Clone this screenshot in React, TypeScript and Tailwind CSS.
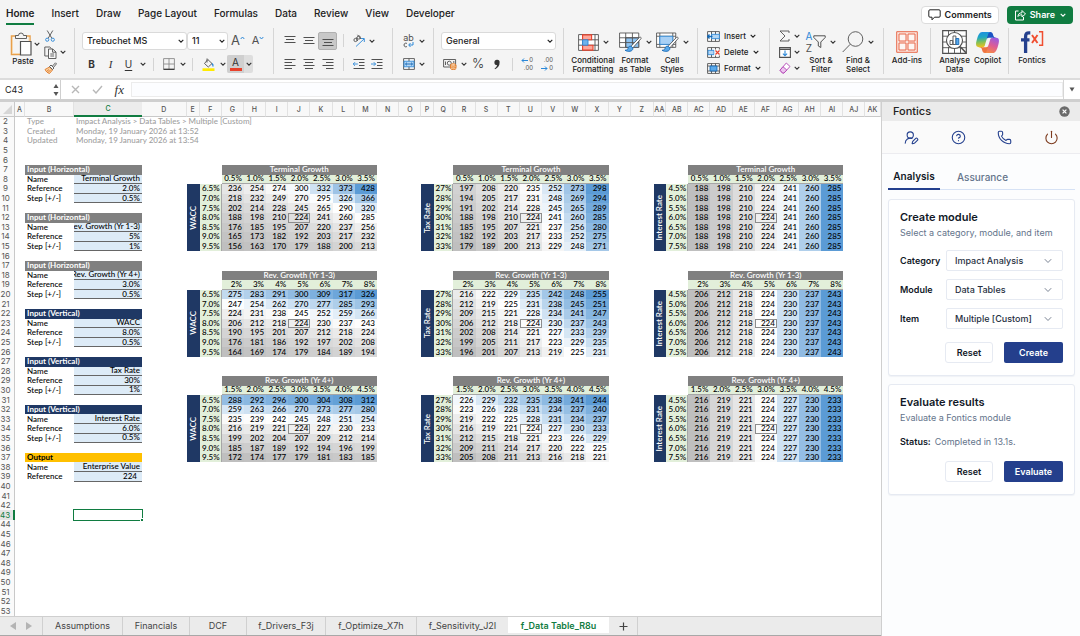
import React, { useState } from "react";
import type { CSSProperties, ReactNode } from "react";
import { CircleQuestionMark, Phone, Power, UserRoundPen } from "lucide-react";

/* ------------------------------------------------------------------ */
/* Small shared pieces                                                 */
/* ------------------------------------------------------------------ */

function Chevron({ className = "" }: { className?: string }) {
  return (
    <svg viewBox="0 0 6 6" className={`h-[6px] w-[6px] shrink-0 ${className}`} fill="none" stroke="currentColor" strokeWidth="1.1" aria-hidden="true">
      <path d="M.7 1.800 3 4.200 5.300 1.800" />
    </svg>
  );
}

function Icon({ size = "h-[14px] w-[14px]", box = "0 0 14 14", children }: { size?: string; box?: string; children: ReactNode }) {
  return (
    <svg viewBox={box} className={`shrink-0 ${size}`} fill="none" stroke="#505050" strokeWidth="0.9" aria-hidden="true">
      {children}
    </svg>
  );
}

function Tool({ label, width, className = "", children }: { label: string; width: string; className?: string; children: ReactNode }) {
  return (
    <button type="button" aria-label={label} className={`flex h-full shrink-0 items-center justify-center ${width} ${className}`}>
      {children}
    </button>
  );
}

function Divider({ width }: { width: string }) {
  return (
    <span className={`flex shrink-0 justify-center ${width}`}>
      <span className="h-[13px] w-px bg-[#d4d4d4]" />
    </span>
  );
}

function Group({ width, className = "", children }: { width: string; className?: string; children: ReactNode }) {
  return <div className={`h-[46px] shrink-0 border-r border-[#d6d6d6] ${width} ${className}`}>{children}</div>;
}

function TwoRows({ top, bottom }: { top: ReactNode; bottom: ReactNode }) {
  return (
    <>
      <div className="flex h-[25px] items-center">{top}</div>
      <div className="flex h-[22px] items-center">{bottom}</div>
    </>
  );
}

function Picker({ label, value, width, size = "text-[9px]" }: { label: string; value: string; width: string; size?: string }) {
  return (
    <span className={`relative flex shrink-0 items-center ${width}`}>
      <select aria-label={label} defaultValue={value} className={`h-[18px] w-full appearance-none rounded-[3px] border border-[#dadada] bg-white pl-[4px] pr-3 font-medium text-[#222] ${size}`}>
        <option>{value}</option>
      </select>
      <Chevron className="pointer-events-none absolute right-[3px] text-[#222]" />
    </span>
  );
}

function BigTool({ width, icon, lines, menu = false }: { width: string; icon: ReactNode; lines: string[]; menu?: boolean }) {
  return (
    <button type="button" className={`flex shrink-0 flex-col items-center ${width}`}>
      <span className="flex h-[28px] items-center gap-[4px]">
        {icon}
        {menu && <Chevron />}
      </span>
      <span className="flex flex-col items-center whitespace-nowrap text-[8px] font-medium leading-[9px] text-[#222]">
        {lines.map((line) => (
          <span key={line}>{line}</span>
        ))}
      </span>
    </button>
  );
}

/* ------------------------------------------------------------------ */
/* Ribbon icons                                                        */
/* ------------------------------------------------------------------ */

const PasteIcon = () => (
  <Icon size="h-[24px] w-[22px]" box="0 0 22 24">
    <path d="M6 4H1.5v18.500H10M16 4h4v5" stroke="#e8a04c" strokeWidth="1.5" />
    <path d="M2.500 5v16.500H10M19 5v4" stroke="#f6d7ac" />
    <path d="M5.500 6.500v-3h3a2.500 2.500 0 0 1 5 0h3v3z" fill="#f4f4f4" />
    <path d="M10.500 9.500h10.500v13.500h-10.500z" fill="#fff" strokeWidth="1.200" />
  </Icon>
);

const CutIcon = () => (
  <Icon size="h-[12px] w-[10px]" box="0 0 10 12">
    <path d="M2.200 .5 7 8.500M7.800 .5 3 8.500" />
    <circle cx="2.200" cy="9.700" r="1.600" stroke="#2b88d8" />
    <circle cx="7.800" cy="9.700" r="1.600" stroke="#2b88d8" />
  </Icon>
);

const CopyIcon = () => (
  <Icon size="h-[13px] w-[13px]" box="0 0 13 13">
    <path d="M4.500 10H.8V1h5l1.700 1.700" />
    <path d="M4.500 3h4.300L12 6v6.500H4.500z" fill="#f8f8f8" />
    <path d="M8.500 3v3.200H12M6.300 8h3.800M6.300 10h3.800" />
  </Icon>
);

const BrushIcon = () => (
  <Icon size="h-[12px] w-[13px]" box="0 0 13 12">
    <path d="M1 7.500 5.500 5l3 3-3 3.500C3.500 11 2 9.500 1 7.500z" stroke="#e07b28" fill="#f9cfa0" />
    <path d="M5.500 4.500 7 3l3 3-1.500 1.500zM8.500 4 11.500.8l1 1L9.800 5" />
    <path d="M2.500 9.500 5 7.500M4 10.500 6.500 8" stroke="#e07b28" />
  </Icon>
);

const BordersIcon = () => (
  <Icon size="h-[12px] w-[12px]" box="0 0 12 12">
    <path d="M.6.600h10.800v10.800H.6zM6 .6v10.800M.6 6h10.800" stroke="#8a8a8a" />
    <path d="M.6 11.300h10.800" stroke="#333" strokeWidth="1.200" />
  </Icon>
);

const FillIcon = () => (
  <Icon size="h-[13px] w-[13px]" box="0 0 13 13">
    <path d="M5.800 1.500 10 5.500 6.300 9 2.500 5.500zM5 .5v4" />
    <path d="M10 5.500c1 1 1.400 1.800.8 3" stroke="#2b88d8" strokeWidth="1.300" />
    <path d="M.5 10.300h12v2.700h-12z" fill="#ffeb00" stroke="none" />
  </Icon>
);

function Lines({ rows }: { rows: [number, number, number][] }) {
  return (
    <Icon size="h-[12px] w-[12px]" box="0 0 12 12">
      {rows.map(([y, from, to]) => (
        <path key={y} d={`M${from} ${y}H${to}`} strokeWidth="1" />
      ))}
    </Icon>
  );
}

const IndentIcon = ({ right = false }: { right?: boolean }) => (
  <Icon size="h-[12px] w-[12px]" box="0 0 12 12">
    <path d="M.5 1.500h11M6 4.500h5.500M6 7.500h5.500M.5 10.500h11" strokeWidth="1" />
    {right ? <path d="M0 6h4.500M2.800 4.200 4.600 6 2.800 7.800" stroke="#2b88d8" /> : <path d="M4.800 6H.3M2 4.200.2 6 2 7.800" stroke="#2b88d8" />}
  </Icon>
);

const MergeIcon = () => (
  <Icon size="h-[12px] w-[12px]" box="0 0 12 12">
    <path d="M.6.600h10.800v10.800H.6z" fill="#fff" />
    <path d="M1 3.200h10v5.600H1z" fill="#b5d6f3" stroke="#2b88d8" />
    <path d="M6 .6v2.600M6 8.800v2.600" />
    <path d="M2.500 6h7M4 4.600 2.500 6 4 7.400M8 4.600 9.500 6 8 7.400" stroke="#1769b5" />
  </Icon>
);

const CurrencyIcon = () => (
  <Icon size="h-[12px] w-[14px]" box="0 0 14 12">
    <path d="M.6 1.500h12v7.500H.6z" />
    <circle cx="6.300" cy="5.200" r="2" />
    <path d="M2.500 3.500v3.500M10.800 3v2" />
    <path d="M7.500 7c0-1.800 5.500-1.800 5.500 0v3.500c0 1.500-5.500 1.500-5.500 0z" fill="#fbd9b5" stroke="#e07b28" />
    <path d="M7.500 7.200c0 1.300 5.500 1.300 5.500 0M7.500 9c0 1.300 5.500 1.300 5.500 0" stroke="#e07b28" />
  </Icon>
);

const CondIcon = () => (
  <Icon size="h-[17px] w-[21px]" box="0 0 21 17">
    <path d="M.6.600h19.800v15.800H.6z" fill="#fff" />
    <path d="M.6 5.800h19.800M.6 11.200h19.800M4.600.6v15.800M17 .6v15.800" />
    <path d="M4.600.900h9v4.900h-9zM4.600 11.200h10.400v4.900H4.600z" fill="#fca79a" stroke="#e8412b" strokeWidth="1.100" />
    <path d="M4.600 5.800H10v5.400H4.600z" fill="#6fb3ec" stroke="#2b88d8" />
  </Icon>
);

const BrushOver = () => (
  <>
    <path d="M21.500 5 12.500 14.500l1.800 1.800L23 6.500c.5-1-.6-2-1.500-1.500z" fill="#fff" />
    <path d="M12.500 14.300c-2-.2-3 1.200-3.200 2.700-.2 1.200-1.500 1.500-3 1.600 2.500 1.900 8.500 1.800 8.200-2.300z" fill="#5aa9ea" stroke="#1769b5" />
  </>
);

const TableIcon = () => (
  <Icon size="h-[20px] w-[23px]" box="0 0 24 20">
    <path d="M.6.600h20v15H.6z" fill="#fff" />
    <path d="M7 5.600h13.600v10H7z" fill="#8fc4f2" />
    <path d="M.6 5.600h20M.6 10.600h20M7 .6v15M14 .6v15" />
    <BrushOver />
  </Icon>
);

const StylesIcon = () => (
  <Icon size="h-[20px] w-[23px]" box="0 0 24 20">
    <path d="M.6.600h20v15H.6z" fill="#fff" />
    <path d="M.6 4h20M.6 12.500h20M4 .6v15M17.500.6v15" />
    <path d="M4 4h13.500v8.500H4z" fill="#a8d0f5" stroke="#2b88d8" />
    <BrushOver />
  </Icon>
);

const RowGrid = ({ kind }: { kind: "insert" | "delete" | "format" }) => (
  <Icon size="h-[11px] w-[13px]" box="0 0 13 11">
    <path d="M.6.600h11.800v9.800H.6zM4.500.6v9.800M8.500.6v9.800" fill="#fff" />
    {kind === "insert" && (
      <>
        <path d="M4.500 3.300h7.900v4.400H4.500z" fill="#b5d6f3" stroke="#2b88d8" />
        <path d="M5.500 5.500H.5M2.500 3.500.5 5.500l2 2" stroke="#1769b5" strokeWidth="1.300" />
      </>
    )}
    {kind === "delete" && (
      <>
        <path d="M1 3.300h6v4.400H1z" fill="#b5d6f3" stroke="#2b88d8" />
        <path d="M7.500 2.500h5.500v6H7.500z" fill="#f4f4f4" stroke="none" />
        <path d="M8.500 3.500l4 4M12.500 3.500l-4 4" stroke="#e8412b" strokeWidth="1.100" />
      </>
    )}
    {kind === "format" && (
      <>
        <path d="M.6 3h11.800M.6 8h11.800" />
        <path d="M3 3h7v5H3z" fill="#5aa9ea" stroke="#1769b5" />
      </>
    )}
  </Icon>
);

const SigmaIcon = () => (
  <Icon size="h-[12px] w-[11px]" box="0 0 11 12">
    <path d="M10 3V1H1l5 5-5 5h9V9" />
  </Icon>
);

const DownFillIcon = () => (
  <Icon size="h-[11px] w-[12px]" box="0 0 12 11">
    <path d="M.6.600h10.800v9.800H.6zM.6 2.400h10.800" fill="#fff" strokeWidth="1.100" />
    <path d="M6 3.500v5.200M3.900 6.700 6 8.800l2.100-2.100" stroke="#2b88d8" strokeWidth="1.100" />
  </Icon>
);

const EraserIcon = () => (
  <Icon size="h-[12px] w-[12px]" box="0 0 12 12">
    <path d="M7.300 1 11 4.500 5 11H3.500L1 8.200z" stroke="#b243b5" fill="#fff" />
    <path d="M4 4.700 7.800 8 5 11H3.500L1 8.200z" stroke="#b243b5" fill="#ecc4ee" />
  </Icon>
);

const SortIcon = () => (
  <span className="flex items-center gap-px">
    <span className="flex flex-col text-[10px] leading-[12px]">
      <span className="text-[#2b88d8]">A</span>
      <span className="text-[#505050]">Z</span>
    </span>
    <Icon size="h-[14px] w-[13px]" box="0 0 13 14">
      <path d="M.8.800h11.400v1.700L7.800 7v5.500L5.300 11V7L.8 2.500z" strokeWidth="1" />
    </Icon>
  </span>
);

const FindIcon = () => (
  <Icon size="h-[22px] w-[22px]" box="0 0 22 22">
    <circle cx="13.500" cy="8" r="7.300" />
    <path d="M8.300 13.200.7 21" />
  </Icon>
);

const AddinsIcon = () => (
  <Icon size="h-[22px] w-[22px]" box="0 0 22 22">
    <g stroke="#e8694a" strokeWidth="1">
      <path d="M.7.700h20.600v20.600H.7z" fill="#fbe3dc" />
      <path d="M3 3h7v7H3zM12 3h7v7h-7zM3 12h7v7H3zM12 12h7v7h-7z" fill="#fdf6f3" />
    </g>
  </Icon>
);

const AnalyseIcon = () => (
  <Icon size="h-[24px] w-[25px]" box="0 0 25 24">
    <path d="M.7.700h23.600v22.600H.7z" fill="#fff" strokeWidth="1.200" />
    <path d="M.7 6.200h23.600M.7 12h23.600M.7 17.700h23.600M6.500 17v6M12.500.7v22.600M18.500 18v5.300M6.500.7v5" />
    <circle cx="12.500" cy="10.500" r="8" fill="#fff" strokeWidth="1.100" />
    <path d="M18 16.500l6 6.300" strokeWidth="1.600" />
    <path d="M8 10.500h2.800v4H8zM11 6h2.900v8.500H11z" fill="#fff" />
    <path d="M14 8.500h2.800v6H14z" fill="#5aa9ea" stroke="#1769b5" />
  </Icon>
);

const CopilotIcon = () => (
  <svg viewBox="0 0 24 22" className="h-[21px] w-[23px]" aria-hidden="true">
    <defs>
      <linearGradient id="cpLeft" x1="0.300" y1="0" x2="0.400" y2="1">
        <stop offset="0" stopColor="#1f8fe0" />
        <stop offset="0.350" stopColor="#1fa7c4" />
        <stop offset="0.650" stopColor="#7fc05a" />
        <stop offset="1" stopColor="#f2c21c" />
      </linearGradient>
      <linearGradient id="cpRight" x1="0.700" y1="0" x2="0.300" y2="1">
        <stop offset="0" stopColor="#9a5be0" />
        <stop offset="0.500" stopColor="#de5c94" />
        <stop offset="1" stopColor="#f58a48" />
      </linearGradient>
    </defs>
    <path fill="#1c55c4" d="M17.533 1.829A2.528 2.528 0 0015.110 0h-.737a2.531 2.531 0 00-2.484 2.087l-1.263 6.937.314-1.080a2.528 2.528 0 012.424-1.833h4.284l1.797.706 1.731-.706h-.505a2.528 2.528 0 01-2.423-1.829l-.715-2.453z" />
    <path fill="#ee7440" d="M6.726 20.160A2.528 2.528 0 009.152 22h1.566c1.370 0 2.490-1.100 2.525-2.480l.17-6.690-.357 1.228a2.528 2.528 0 01-2.423 1.830h-4.320l-1.540-.842-1.667.843h.497c1.124 0 2.113.75 2.426 1.840l.697 2.432z" />
    <path fill="url(#cpLeft)" d="M15 0H6.252c-2.500 0-4 3.331-5 6.662-1.184 3.947-2.734 9.225 1.750 9.225H6.780c1.130 0 2.120-.753 2.430-1.847.657-2.317 1.809-6.359 2.713-9.436.46-1.563.842-2.906 1.430-3.742A1.970 1.970 0 0115 0" />
    <path fill="url(#cpRight)" d="M9 22h8.749c2.500 0 4-3.332 5-6.663 1.184-3.948 2.734-9.227-1.750-9.227H17.220c-1.129 0-2.120.754-2.430 1.848a1149.200 1149.200 0 01-2.713 9.437c-.46 1.564-.842 2.907-1.430 3.743A1.970 1.970 0 019 22" />
  </svg>
);

const FonticsIcon = () => (
  <svg viewBox="0 0 24 24" className="h-[24px] w-[24px]" fill="none" aria-hidden="true">
    <path d="M10.300 2.800H9C6.600 2.800 5.600 4 5.600 6.500V23M1 9.800h8.500" stroke="#24408e" strokeWidth="3.300" />
    <path d="M12 5l5.500 8M17.500 5 12 13" stroke="#f04e30" strokeWidth="1.900" />
    <path d="M19 1.800h3.500v13.400H19" stroke="#f04e30" strokeWidth="1.500" />
  </svg>
);

/* ------------------------------------------------------------------ */
/* Ribbon                                                              */
/* ------------------------------------------------------------------ */

const MENU = ["Home", "Insert", "Draw", "Page Layout", "Formulas", "Data", "Review", "View", "Developer"];

function MenuBar() {
  return (
    <header className="flex h-[28px] shrink-0 items-center justify-between pl-[6px] pr-[7px] pt-[2px]">
      <nav className="flex gap-[17px]">
        {MENU.map((item) => (
          <a key={item} href="#" className={`border-b-2 pb-[2px] text-[10px] leading-[15px] text-[#222] ${item === "Home" ? "border-[#107c41] font-semibold" : "border-transparent font-medium"}`}>
            {item}
          </a>
        ))}
      </nav>
      <div className="flex gap-[8px]">
        <button type="button" className="flex h-[18px] items-center gap-[4px] rounded-[4px] border border-[#dcdcdc] bg-white px-[6px] text-[9px] font-semibold text-[#222]">
          <Icon size="h-[12px] w-[13px]" box="0 0 13 12">
            <path d="M2 .8h9q1.200 0 1.200 1.200v5q0 1.200-1.200 1.200H6.500L4 10.800V8.200H2Q.8 8.200.8 7V2Q.8.800 2 .8z" stroke="#222" strokeWidth="1" />
          </Icon>
          Comments
        </button>
        <button type="button" className="flex h-[18px] items-center gap-[4px] rounded-[4px] bg-[#107c41] px-[7px] text-[9px] font-semibold text-white">
          <Icon size="h-[12px] w-[12px]" box="0 0 12 12">
            <path d="M4.500 2H1.500v9h8V8M4 7.500c0-2.500 1.500-3.700 4-3.700V1.500L11.500 5 8 8V5.800C6 5.800 5 6.300 4 7.500z" stroke="#fff" strokeWidth="1" />
          </Icon>
          Share
          <Chevron className="ml-px" />
        </button>
      </div>
    </header>
  );
}

function Ribbon() {
  return (
    <div className="flex h-[50px] shrink-0 overflow-hidden text-[#333]" role="toolbar" aria-label="Home">
      <Group width="w-[75px]" className="flex pl-[10px]">
        <button type="button" className="flex w-[26px] flex-col items-center">
          <span className="flex h-[29px] items-center gap-[2px] self-start pt-[2px]">
            <PasteIcon />
            <Chevron />
          </span>
          <span className="text-[8px] font-medium leading-[9px] text-[#222]">Paste</span>
        </button>
        <div className="flex flex-col justify-between pl-[8px] pt-[2px]">
          <button type="button" aria-label="Cut" className="flex justify-start pl-px"><CutIcon /></button>
          <button type="button" aria-label="Copy" className="flex items-center gap-[3px]"><CopyIcon /><Chevron /></button>
          <button type="button" aria-label="Format painter" className="flex"><BrushIcon /></button>
        </div>
      </Group>

      <Group width="w-[199px]" className="pl-[7px]">
        <TwoRows
          top={
            <>
              <Picker label="Font" value="Trebuchet MS" width="w-[105px]" />
              <Picker label="Font size" value="11" width="w-[41px]" />
              <Tool label="Grow font" width="w-[20px]" className="text-[13px] text-[#505050]">
                A
                <svg viewBox="0 0 5 10" className="h-[10px] w-[5px]" fill="none" stroke="#2b88d8" aria-hidden="true"><path d="M.7 3 2.500 1l1.800 2" /></svg>
              </Tool>
              <Tool label="Shrink font" width="w-[20px]" className="text-[11px] text-[#505050]">
                A
                <svg viewBox="0 0 5 10" className="h-[10px] w-[5px]" fill="none" stroke="#2b88d8" aria-hidden="true"><path d="M.7 1 2.500 3l1.800-2" /></svg>
              </Tool>
            </>
          }
          bottom={
            <>
              <Tool label="Bold" width="w-[19px]" className="text-[10px] font-bold">B</Tool>
              <Tool label="Italic" width="w-[19px]" className="font-['Liberation_Serif',serif] text-[11px] italic">I</Tool>
              <Tool label="Underline" width="w-[17px]" className="text-[10px] underline underline-offset-2">U</Tool>
              <Tool label="Underline style" width="w-[12px]"><Chevron /></Tool>
              <Divider width="w-[9px]" />
              <Tool label="Borders" width="w-[21px]"><BordersIcon /></Tool>
              <Tool label="Border style" width="w-[8px]"><Chevron /></Tool>
              <Divider width="w-[11px]" />
              <Tool label="Fill colour" width="w-[20px]"><FillIcon /></Tool>
              <Tool label="Fill colours" width="w-[9px]"><Chevron /></Tool>
              <span className="flex h-[18px] w-[26px] shrink-0 rounded-[2px] bg-[#dedede]">
                <Tool label="Font colour" width="w-[17px]" className="flex-col rounded-l-[2px] bg-[#cfcfcf] text-[10px] leading-[11px]">
                  A
                  <span className="h-[3px] w-[12px] bg-[#e8412b]" />
                </Tool>
                <Tool label="Font colours" width="w-[9px]"><Chevron /></Tool>
              </span>
            </>
          }
        />
      </Group>

      <Group width="w-[119px]" className="pl-[6px]">
        <TwoRows
          top={
            <>
              <Tool label="Align top" width="w-[19px]"><Lines rows={[[1.500, 0.500, 11.500], [4.500, 2, 10], [7.500, 0.500, 11.500]]} /></Tool>
              <Tool label="Align middle" width="w-[19px]"><Lines rows={[[2.500, 0.500, 11.500], [5.500, 2, 10], [8.500, 0.500, 11.500]]} /></Tool>
              <span className="flex h-[18px] shrink-0 rounded-[2px] border border-[#b0b0b0] bg-[#c8c8c8]">
                <Tool label="Align bottom" width="w-[17px]"><Lines rows={[[4.500, 0.500, 11.500], [7.500, 2, 10], [10.500, 0.500, 11.500]]} /></Tool>
              </span>
              <Divider width="w-[13px]" />
              <Tool label="Orientation" width="w-[17px]">
                <Icon size="h-[14px] w-[14px]">
                  <circle cx="3.500" cy="6" r="1.600" />
                  <circle cx="6.800" cy="3.500" r="1.600" />
                  <path d="M4.300 3.300 5.600 7M5.500.8 9 5" />
                  <path d="M4 12.500 12 5M9 4.500h3.300V8" stroke="#2b88d8" />
                </Icon>
              </Tool>
              <Tool label="Orientation options" width="w-[9px]"><Chevron /></Tool>
            </>
          }
          bottom={
            <>
              <Tool label="Align left" width="w-[19px]"><Lines rows={[[1.500, 0.500, 11.500], [4.500, 0.500, 8], [7.500, 0.500, 11.500], [10.500, 0.500, 8]]} /></Tool>
              <Tool label="Align centre" width="w-[19px]"><Lines rows={[[1.500, 0.500, 11.500], [4.500, 2, 10], [7.500, 0.500, 11.500], [10.500, 2, 10]]} /></Tool>
              <Tool label="Align right" width="w-[19px]"><Lines rows={[[1.500, 0.500, 11.500], [4.500, 4, 11.500], [7.500, 0.500, 11.500], [10.500, 4, 11.500]]} /></Tool>
              <Divider width="w-[13px]" />
              <Tool label="Decrease indent" width="w-[17px]"><IndentIcon /></Tool>
              <Tool label="Increase indent" width="w-[20px]"><IndentIcon right /></Tool>
            </>
          }
        />
      </Group>

      <Group width="w-[41px]" className="pl-[7px]">
        <TwoRows
          top={
            <>
              <Tool label="Wrap text" width="w-[17px]" className="flex-col text-[9px] leading-[8px] text-[#505050]">
                ab
                <svg viewBox="0 0 11 6" className="h-[6px] w-[11px]" fill="none" stroke="#505050" aria-hidden="true">
                  <path d="M4 1.600C3 .6 1 1.100 1 3s2 2.400 3 1.400" strokeWidth="0.900" />
                  <path d="M10 0v3H6M7.500 1 5.700 3l1.800 2" stroke="#2b88d8" />
                </svg>
              </Tool>
              <Tool label="Wrap options" width="w-[9px]"><Chevron /></Tool>
            </>
          }
          bottom={
            <>
              <Tool label="Merge" width="w-[17px]"><MergeIcon /></Tool>
              <Tool label="Merge options" width="w-[9px]"><Chevron /></Tool>
            </>
          }
        />
      </Group>

      <Group width="w-[130px]" className="pl-[7px]">
        <TwoRows
          top={<Picker label="Number format" value="General" width="w-[115px]" />}
          bottom={
            <>
              <Tool label="Currency" width="w-[18px]"><CurrencyIcon /></Tool>
              <Tool label="Currency options" width="w-[9px]"><Chevron /></Tool>
              <Tool label="Percent" width="w-[20px]" className="text-[13px] font-light">%</Tool>
              <Tool label="Comma" width="w-[18px]">
                <svg viewBox="0 0 8 11" className="h-[11px] w-[8px]" fill="#333" aria-hidden="true"><path d="M4 .8a2.500 2.500 0 0 1 2.600 2.700C6.600 6.500 5 9 2 10.300l-.4-.7C3 8.600 3.900 7.500 4 6a2.600 2.600 0 1 1 0-5.200z" /></svg>
              </Tool>
              <Divider width="w-[12px]" />
              <Tool label="Increase decimal" width="w-[19px]" className="flex-col text-[6px] leading-[8px] text-[#505050]">
                <span className="flex items-center gap-px self-end pr-[4px]">
                  <svg viewBox="0 0 7 5" className="h-[5px] w-[7px]" fill="none" stroke="#2b88d8" aria-hidden="true"><path d="M7 2.500H1M3 .5l-2 2 2 2" /></svg>0
                </span>
                <span className="self-end pr-[4px]">.00</span>
              </Tool>
              <Tool label="Decrease decimal" width="w-[20px]" className="flex-col text-[6px] leading-[8px] text-[#505050]">
                <span className="self-end pr-[4px]">.00</span>
                <span className="flex items-center gap-px self-end pr-[4px]">
                  <svg viewBox="0 0 7 5" className="h-[5px] w-[7px]" fill="none" stroke="#2b88d8" aria-hidden="true"><path d="M0 2.500h6M4 .5l2 2-2 2" /></svg>0
                </span>
              </Tool>
            </>
          }
        />
      </Group>

      <Group width="w-[134px]" className="flex pl-[6px]">
        <BigTool width="w-[46px]" icon={<CondIcon />} menu lines={["Conditional", "Formatting"]} />
        <BigTool width="w-[38px]" icon={<TableIcon />} menu lines={["Format", "as Table"]} />
        <BigTool width="w-[36px]" icon={<StylesIcon />} menu lines={["Cell", "Styles"]} />
      </Group>

      <Group width="w-[72px]" className="flex flex-col justify-between pl-[9px] pt-[2px]">
        {(["Insert", "Delete", "Format"] as const).map((name) => (
          <button key={name} type="button" className="flex h-[12px] items-center gap-[4px] text-[8px] font-medium leading-[12px] text-[#222]">
            <RowGrid kind={name.toLowerCase() as "insert" | "delete" | "format"} />
            {name}
            <Chevron />
          </button>
        ))}
      </Group>

      <Group width="w-[114px]" className="flex pl-[9px]">
        <div className="flex flex-col justify-between pt-[2px]">
          <button type="button" aria-label="AutoSum" className="flex h-[12px] items-center gap-[4px]"><SigmaIcon /><Chevron /></button>
          <button type="button" aria-label="Fill" className="flex h-[12px] items-center gap-[3px]"><DownFillIcon /><Chevron /></button>
          <button type="button" aria-label="Clear" className="flex h-[12px] items-center gap-[3px]"><EraserIcon /><Chevron /></button>
        </div>
        <BigTool width="w-[42px]" icon={<SortIcon />} menu lines={["Sort &", "Filter"]} />
        <BigTool width="w-[32px]" icon={<FindIcon />} menu lines={["Find &", "Select"]} />
      </Group>

      <Group width="w-[47px]" className="flex justify-center">
        <BigTool width="w-[40px]" icon={<AddinsIcon />} lines={["Add-ins"]} />
      </Group>
      <Group width="w-[78px]" className="flex pl-[7px]">
        <BigTool width="w-[33px]" icon={<AnalyseIcon />} lines={["Analyse", "Data"]} />
        <BigTool width="w-[33px]" icon={<CopilotIcon />} lines={["Copilot"]} />
      </Group>
      <div className="flex pl-[6px]">
        <BigTool width="w-[34px]" icon={<FonticsIcon />} lines={["Fontics"]} />
      </div>
    </div>
  );
}

function FormulaBar() {
  return (
    <div className="flex h-[24px] shrink-0 items-center border-b-[3px] border-t-2 border-b-[#cfcfcf] border-t-[#dcdcdc] bg-white">
      <div className="flex h-full w-[61px] shrink-0 items-center justify-between border-r border-[#cfcfcf] pl-[5px] pr-px">
        <input aria-label="Name box" defaultValue="C43" className="w-[40px] bg-transparent text-[9px] text-[#222] outline-none" />
        <svg viewBox="0 0 6 14" className="h-[14px] w-[6px]" fill="#555" aria-hidden="true">
          <path d="M.5 5 3 1l2.500 4zM.5 9 3 13l2.500-4z" />
        </svg>
      </div>
      <div className="flex w-[70px] shrink-0 items-center justify-between pl-[10px] pr-[7px]">
        <button type="button" aria-label="Cancel" className="text-[#b8b8b8]">
          <svg viewBox="0 0 9 9" className="h-[9px] w-[9px]" fill="none" stroke="currentColor" strokeWidth="1.400" aria-hidden="true"><path d="M1 1l7 7M8 1 1 8" /></svg>
        </button>
        <button type="button" aria-label="Enter" className="text-[#b8b8b8]">
          <svg viewBox="0 0 11 9" className="h-[9px] w-[11px]" fill="none" stroke="currentColor" strokeWidth="1.400" aria-hidden="true"><path d="M1 4.800 4 8l6-7" /></svg>
        </button>
        <button type="button" aria-label="Insert function" className="font-['Liberation_Serif',serif] text-[13px] italic leading-[14px] text-[#333]">fx</button>
      </div>
      <input aria-label="Formula" className="h-[15px] min-w-0 flex-1 border border-[#ececec] bg-[#fcfdff] px-1 text-[9px] outline-none" />
      <button type="button" aria-label="Expand formula bar" className="flex h-full w-[17px] shrink-0 items-center justify-center border-l border-[#d6d6d6]">
        <svg viewBox="0 0 6 5" className="h-[5px] w-[6px]" fill="#555" aria-hidden="true"><path d="M.5.500h5L3 4.500z" /></svg>
      </button>
    </div>
  );
}

/* ------------------------------------------------------------------ */
/* Worksheet                                                           */
/* ------------------------------------------------------------------ */

const COLUMNS = "A B C D E F G H I J K L M N O P Q R S T U V W X Y Z AA AB AC AD AE AF AG AH AI AJ AK".split(" ");
const FIRST_ROW = 2;
const LAST_ROW = 53;

/** Grid line of a column letter; line 1 holds the row numbers. */
const col = (name: string) => COLUMNS.indexOf(name) + 2;

type Cell = {
  row: number;
  column: number;
  text?: string;
  rows?: number;
  columns?: number;
  className?: string;
  vertical?: boolean;
  fill?: string;
};

const T_GROWTH = ["0.5%", "1.0%", "1.5%", "2.0%", "2.5%", "3.0%", "3.5%"];
const EARLY = ["2%", "3%", "4%", "5%", "6%", "7%", "8%"];
const LATE = ["1.5%", "2.0%", "2.5%", "3.0%", "3.5%", "4.0%", "4.5%"];
const WACC = ["6.5%", "7.0%", "7.5%", "8.0%", "8.5%", "9.0%", "9.5%"];
const TAX = ["27%", "28%", "29%", "30%", "31%", "32%", "33%"];
const INTEREST = ["4.5%", "5.0%", "5.5%", "6.0%", "6.5%", "7.0%", "7.5%"];

const parse = (text: string) => text.split("/").map((line) => line.trim().split(" ").map(Number));
const repeat = (line: string) => parse(Array(7).fill(line).join("/"));

type Matrix = { top: number; side: string; sideLabel: string; sideValues: string[]; title: string; head: string[]; data: number[][] };

const MATRICES: Matrix[] = [
  { top: 7, side: "E", sideLabel: "WACC", sideValues: WACC, title: "Terminal Growth", head: T_GROWTH, data: parse("236 254 274 300 332 373 428/218 232 249 270 295 326 366/202 214 228 245 265 290 320/188 198 210 224 241 260 285/176 185 195 207 220 237 256/165 173 182 192 203 217 232/156 163 170 179 188 200 213") },
  { top: 7, side: "P", sideLabel: "Tax Rate", sideValues: TAX, title: "Terminal Growth", head: T_GROWTH, data: parse("197 208 220 235 252 273 298/194 205 217 231 248 269 294/191 202 214 228 245 265 289/188 198 210 224 241 260 285/185 195 207 221 237 256 280/182 192 203 217 233 252 275/179 189 200 213 229 248 271") },
  { top: 7, side: "AA", sideLabel: "Interest Rate", sideValues: INTEREST, title: "Terminal Growth", head: T_GROWTH, data: repeat("188 198 210 224 241 260 285") },
  { top: 18, side: "E", sideLabel: "WACC", sideValues: WACC, title: "Rev. Growth (Yr 1-3)", head: EARLY, data: parse("275 283 291 300 309 317 326/247 254 262 270 277 285 293/224 231 238 245 252 259 266/206 212 218 224 230 237 243/190 195 201 207 212 218 224/176 181 186 192 197 202 208/164 169 174 179 184 189 194") },
  { top: 18, side: "P", sideLabel: "Tax Rate", sideValues: TAX, title: "Rev. Growth (Yr 1-3)", head: EARLY, data: parse("216 222 229 235 242 248 255/212 219 225 231 238 245 251/209 215 221 228 234 241 247/206 212 218 224 230 237 243/202 208 214 221 227 233 239/199 205 211 217 223 229 235/196 201 207 213 219 225 231") },
  { top: 18, side: "AA", sideLabel: "Interest Rate", sideValues: INTEREST, title: "Rev. Growth (Yr 1-3)", head: EARLY, data: repeat("206 212 218 224 230 237 243") },
  { top: 29, side: "E", sideLabel: "WACC", sideValues: WACC, title: "Rev. Growth (Yr 4+)", head: LATE, data: parse("288 292 296 300 304 308 312/259 263 266 270 273 277 280/235 239 242 245 248 251 254/216 219 221 224 227 230 233/199 202 204 207 209 212 214/185 187 189 192 194 196 199/172 174 177 179 181 183 185") },
  { top: 29, side: "P", sideLabel: "Tax Rate", sideValues: TAX, title: "Rev. Growth (Yr 4+)", head: LATE, data: parse("226 229 232 235 238 241 244/223 226 228 231 234 237 240/219 222 225 228 231 234 237/216 219 221 224 227 230 233/212 215 218 221 223 226 229/209 211 214 217 220 222 225/205 208 211 213 216 218 221") },
  { top: 29, side: "AA", sideLabel: "Interest Rate", sideValues: INTEREST, title: "Rev. Growth (Yr 4+)", head: LATE, data: repeat("216 219 221 224 227 230 233") },
];

const BLOCKS: { row: number; title: string; tone: string; items: [string, string][] }[] = [
  { row: 7, title: "Input (Horizontal)", tone: "bg-[#808080] text-white", items: [["Name", "Terminal Growth"], ["Reference", "2.0%"], ["Step [+/-]", "0.5%"]] },
  { row: 12, title: "Input (Horizontal)", tone: "bg-[#808080] text-white", items: [["Name", "Rev. Growth (Yr 1-3)"], ["Reference", "5%"], ["Step [+/-]", "1%"]] },
  { row: 17, title: "Input (Horizontal)", tone: "bg-[#808080] text-white", items: [["Name", "Rev. Growth (Yr 4+)"], ["Reference", "3.0%"], ["Step [+/-]", "0.5%"]] },
  { row: 22, title: "Input (Vertical)", tone: "bg-[#1f3864] text-white", items: [["Name", "WACC"], ["Reference", "8.0%"], ["Step [+/-]", "0.5%"]] },
  { row: 27, title: "Input (Vertical)", tone: "bg-[#1f3864] text-white", items: [["Name", "Tax Rate"], ["Reference", "30%"], ["Step [+/-]", "1%"]] },
  { row: 32, title: "Input (Vertical)", tone: "bg-[#1f3864] text-white", items: [["Name", "Interest Rate"], ["Reference", "6.0%"], ["Step [+/-]", "0.5%"]] },
  { row: 37, title: "Output", tone: "bg-[#ffc000] text-black", items: [["Name", "Enterprise Value"], ["Reference", "224"]] },
];

/** Three-colour scale: grey at the minimum, white half way, blue at the maximum. */
function scale(value: number, min: number, max: number) {
  const t = (value - min) / (max - min);
  const [from, to, k] = t < 0.5 ? [[191, 191, 191], [255, 255, 255], t * 2] : [[255, 255, 255], [91, 155, 213], t * 2 - 1];
  return `rgb(${from.map((c, i) => Math.round(c + (to[i] - c) * k)).join(",")})`;
}

function buildCells(): Cell[] {
  const cells: Cell[] = [];
  const notes: [string, string][] = [
    ["Type", "Impact Analysis > Data Tables > Multiple [Custom]"],
    ["Created", "Monday, 19 January 2026 at 13:52"],
    ["Updated", "Monday, 19 January 2026 at 13:54"],
  ];
  notes.forEach(([name, value], i) => {
    cells.push({ row: 2 + i, column: col("B"), text: name, className: "pl-[2px] text-[#a0a0a0]" });
    cells.push({ row: 2 + i, column: col("C"), text: value, className: "pl-[2px] text-[#a0a0a0]" });
  });
  for (const block of BLOCKS) {
    cells.push({ row: block.row, column: col("B"), columns: 2, text: block.title, className: `pl-[2px] font-bold ${block.tone}` });
    block.items.forEach(([name, value], i) => {
      cells.push({ row: block.row + 1 + i, column: col("B"), text: name, className: "pl-[2px]" });
      cells.push({
        row: block.row + 1 + i,
        column: col("C"),
        text: value,
        className: `justify-end overflow-hidden border-b border-[#666] bg-[#ddebf7] ${value === "224" ? "pr-[5px]" : "pr-[2px]"}`,
      });
    });
  }
  for (const m of MATRICES) {
    const side = col(m.side);
    const values = m.data.flat();
    const min = Math.min(...values);
    const max = Math.max(...values);
    cells.push({ row: m.top, column: side + 2, columns: 7, text: m.title, className: "justify-center bg-[#808080] font-semibold text-white" });
    m.head.forEach((text, i) => cells.push({ row: m.top + 1, column: side + 2 + i, text, className: "justify-end border-b border-[#a6a6a6] bg-[#e2efda] pr-[2px]" }));
    cells.push({ row: m.top + 2, column: side, rows: 7, text: m.sideLabel, vertical: true, className: "justify-center bg-[#1f3864] font-semibold text-white" });
    m.data.forEach((line, r) => {
      cells.push({ row: m.top + 2 + r, column: side + 1, text: m.sideValues[r], className: "justify-end border-r border-[#a6a6a6] bg-[#e2efda] pr-px" });
      line.forEach((value, c) =>
        cells.push({
          row: m.top + 2 + r,
          column: side + 2 + c,
          text: String(value),
          fill: scale(value, min, max),
          className: r === 3 && c === 3 ? "justify-end border border-[#8c8c8c] pr-px" : "justify-end pr-[2px]",
        }),
      );
    });
  }
  return cells;
}

const CELLS = buildCells();

function SheetCell({ cell }: { cell: Cell }) {
  const place: CSSProperties = {
    gridRow: `${cell.row} / span ${cell.rows ?? 1}`,
    gridColumn: `${cell.column} / span ${cell.columns ?? 1}`,
    backgroundColor: cell.fill,
  };
  return (
    <td rowSpan={cell.rows} colSpan={cell.columns} style={place} className={`flex min-h-0 min-w-0 items-center whitespace-nowrap ${cell.className ?? ""}`}>
      {cell.vertical ? <span className="rotate-180 leading-[9px] [writing-mode:vertical-rl]">{cell.text}</span> : cell.text}
    </td>
  );
}

const COLUMN_TRACKS =
  "grid-cols-[142fr_100fr_490fr_680fr_448fr_130fr_220fr_repeat(7,222fr)_225fr_220fr_125fr_195fr_repeat(7,222fr)_225fr_225fr_127fr_220fr_repeat(7,222fr)_215fr_161fr]";

function Sheet() {
  const rows = Array.from({ length: LAST_ROW - FIRST_ROW + 1 }, (_, i) => FIRST_ROW + i);
  return (
    <table className={`grid min-h-0 flex-1 grid-rows-[15px_repeat(52,minmax(0,1fr))] overflow-hidden bg-white font-['Lato',sans-serif] text-[8px] font-medium leading-[9px] text-black ${COLUMN_TRACKS}`}>
      <thead className="contents">
        <tr className="contents">
          <th aria-label="Select all" className="flex items-end justify-end border-b border-r border-[#c9c9c9] bg-[#f4f4f4] p-[2px]">
            <svg viewBox="0 0 9 9" className="h-[9px] w-[9px]" fill="#d6d6d6" aria-hidden="true"><path d="M9 0v9H0z" /></svg>
          </th>
          {COLUMNS.map((name) => (
            <th
              key={name}
              scope="col"
              className={`flex min-w-0 items-center justify-center font-['Inter',sans-serif] text-[7px] font-medium ${
                name === "C" ? "border-b-2 border-[#107c41] bg-[#ececec] text-[#107c41]" : "border-b border-r border-b-[#c9c9c9] border-r-[#e2e2e2] bg-[#f8f8f8] text-[#555]"
              }`}
            >
              {name}
            </th>
          ))}
        </tr>
      </thead>
      <tbody className="contents">
        {rows.map((number) => (
          <tr key={number} className="contents">
            <th
              scope="row"
              style={{ gridRow: number, gridColumn: 1 }}
              className={`flex min-h-0 items-center justify-center pr-[3px] font-['Inter',sans-serif] text-[8px] font-normal ${
                number === 43 ? "border-r-2 border-[#107c41] bg-[#e4e4e4] text-[#107c41]" : "border-r border-[#c9c9c9] bg-[#fafafa] text-[#555]"
              }`}
            >
              {number}
            </th>
            {CELLS.filter((cell) => cell.row === number).map((cell) => (
              <SheetCell key={`${cell.row}-${cell.column}`} cell={cell} />
            ))}
            {number === 43 && (
              <td style={{ gridRow: 43, gridColumn: col("C") }} className="relative -m-px border border-[#107c41]">
                <span className="absolute -bottom-[2px] -right-[2px] h-[4px] w-[4px] border border-white bg-[#107c41]" />
              </td>
            )}
          </tr>
        ))}
      </tbody>
    </table>
  );
}

const SHEETS: [string, string][] = [
  ["Assumptions", "w-[80px]"],
  ["Financials", "w-[67px]"],
  ["DCF", "w-[57px]"],
  ["f_Drivers_F3j", "w-[79px]"],
  ["f_Optimize_X7h", "w-[91px]"],
  ["f_Sensitivity_J2I", "w-[92px]"],
  ["f_Data Table_R8u", "w-[101px]"],
];

function SheetTabs() {
  const [active, setActive] = useState("f_Data Table_R8u");
  return (
    <div className="flex h-[20px] shrink-0 border-b border-t border-b-[#a8a8a8] border-t-[#cfcfcf] bg-[#ebebeb] text-[9px] text-[#444]">
      <div className="flex w-[42px] shrink-0 items-center justify-center gap-[10px]">
        <button type="button" aria-label="Previous sheet"><svg viewBox="0 0 6 8" className="h-[8px] w-[6px]" fill="#b4b4b4" aria-hidden="true"><path d="M6 0v8L0 4z" /></svg></button>
        <button type="button" aria-label="Next sheet"><svg viewBox="0 0 6 8" className="h-[8px] w-[6px]" fill="#b4b4b4" aria-hidden="true"><path d="M0 0v8l6-4z" /></svg></button>
      </div>
      {SHEETS.map(([name, width]) => (
        <button
          key={name}
          type="button"
          onClick={() => setActive(name)}
          className={`shrink-0 whitespace-nowrap ${width} ${active === name ? "mb-[2px] bg-white pt-px font-semibold text-[#107c41]" : "border-l border-[#d0d0d0]"}`}
        >
          {name}
        </button>
      ))}
      <button type="button" aria-label="New sheet" className="flex w-[29px] shrink-0 items-center justify-center border-r border-[#d0d0d0]">
        <svg viewBox="0 0 9 9" className="h-[9px] w-[9px]" stroke="#444" strokeWidth="1.200" aria-hidden="true"><path d="M4.500.5v8M.5 4.500h8" /></svg>
      </button>
    </div>
  );
}

/* ------------------------------------------------------------------ */
/* Task pane                                                           */
/* ------------------------------------------------------------------ */

function Field({ id, label, value }: { id: string; label: string; value: string }) {
  return (
    <div className="flex items-center">
      <label htmlFor={id} className="w-[46px] shrink-0 text-[9px] font-semibold text-[#111827]">{label}</label>
      <span className="relative flex min-w-0 flex-1 items-center">
        <select id={id} defaultValue={value} className="h-[21px] w-full appearance-none rounded-[2px] border border-[#e6eaf2] bg-white pl-[8px] pr-5 text-[9px] font-medium text-[#27303f]">
          <option>{value}</option>
        </select>
        <svg viewBox="0 0 8 6" className="pointer-events-none absolute right-[11px] h-[6px] w-[8px]" fill="none" stroke="#7b8494" aria-hidden="true"><path d="M.8 1.200 4 4.500l3.200-3.300" /></svg>
      </span>
    </div>
  );
}

function Card({ title, note, action, children }: { title: string; note: string; action: string; children: ReactNode }) {
  return (
    <section className="flex flex-col rounded-[3px] border border-[#e6eaf2] bg-white px-[11px] pb-[12px] pt-[10px] shadow-[0_1px_1px_rgba(20,40,90,0.050)]">
      <h2 className="text-[11px] font-semibold leading-[14px] text-[#111827]">{title}</h2>
      <p className="pt-[3px] text-[9px] leading-[12px] text-[#64748b]">{note}</p>
      {children}
      <div className="flex justify-end gap-[11px]">
        <button type="button" className="h-[21px] w-[48px] rounded-[3px] border border-[#e6eaf2] bg-white text-[9px] font-semibold text-[#111827]">Reset</button>
        <button type="button" className="h-[21px] w-[59px] rounded-[2px] bg-[#243f8c] text-[9px] font-semibold text-white">{action}</button>
      </div>
    </section>
  );
}

function TaskPane() {
  return (
    <aside className="flex w-[199px] shrink-0 flex-col border-l border-[#cfcfcf] bg-[#fcfdfe]">
      <div className="flex h-[19px] shrink-0 items-center justify-between bg-[#ebebeb] pl-[11px] pr-[10px]">
        <h1 className="text-[11px] font-medium text-[#222]">Fontics</h1>
        <button type="button" aria-label="Close">
          <svg viewBox="0 0 11 11" className="h-[11px] w-[11px]" aria-hidden="true">
            <circle cx="5.500" cy="5.500" r="5.200" fill="#6b6b6b" />
            <path d="M3.600 3.600l3.800 3.800M7.400 3.600 3.600 7.400" stroke="#fff" strokeWidth="1.200" />
          </svg>
        </button>
      </div>
      <div className="flex h-[33px] shrink-0 items-center justify-between border-b border-[#ececf0] bg-[#fafafa] pl-[22px] pr-[21px] text-[#24408e]">
        <button type="button" aria-label="Account"><UserRoundPen size={15} strokeWidth={1.75} /></button>
        <button type="button" aria-label="Help"><CircleQuestionMark size={15} strokeWidth={1.75} /></button>
        <button type="button" aria-label="Contact"><Phone size={15} strokeWidth={1.75} /></button>
        <button type="button" aria-label="Sign out" className="text-[#7c3a1d]"><Power size={15} strokeWidth={1.75} /></button>
      </div>
      <div className="flex flex-col gap-[8px] pl-[6px] pr-[5px] pt-[12px]">
        <div role="tablist" className="mb-px flex border-b border-[#d6e2f5] text-[10px] leading-[20px]">
          <button type="button" role="tab" aria-selected="true" className="-mb-px w-[52px] border-b-2 border-[#24408e] pb-[2px] font-semibold text-[#111827]">Analysis</button>
          <button type="button" role="tab" aria-selected="false" className="pb-[2px] pl-[17px] font-medium text-[#64748b]">Assurance</button>
        </div>
        <Card title="Create module" note="Select a category, module, and item" action="Create">
          <div className="flex flex-col gap-[8px] pb-[13px] pt-[11px]">
            <Field id="category" label="Category" value="Impact Analysis" />
            <Field id="module" label="Module" value="Data Tables" />
            <Field id="item" label="Item" value="Multiple [Custom]" />
          </div>
        </Card>
        <Card title="Evaluate results" note="Evaluate a Fontics module" action="Evaluate">
          <p className="flex gap-[4px] pb-[13px] pt-[12px] text-[9px] leading-[12px] text-[#64748b]">
            <span className="font-semibold text-[#111827]">Status:</span>
            Completed in 13.1s.
          </p>
        </Card>
      </div>
    </aside>
  );
}

export default function App() {
  return (
    <div className="flex h-screen flex-col overflow-hidden bg-[#f4f4f4] font-['Inter',sans-serif]">
      <MenuBar />
      <Ribbon />
      <FormulaBar />
      <div className="flex min-h-0 flex-1">
        <main className="flex min-w-0 flex-1 flex-col">
          <Sheet />
          <SheetTabs />
        </main>
        <TaskPane />
      </div>
    </div>
  );
}
